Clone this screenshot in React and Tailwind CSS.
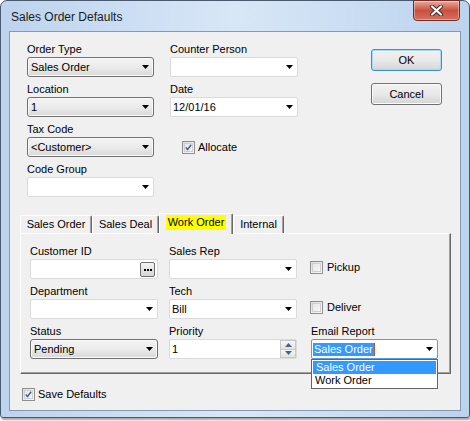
import React from "react";

const Arrow = () => (
  <svg width="7" height="4" viewBox="0 0 7 4" className="shrink-0">
    <path d="M0 0h7L3.5 4z" fill="#000" />
  </svg>
);

const Check = ({ checked }) => (
  <div className="w-[13px] h-[13px] border border-[#8e8f8f] bg-gradient-to-br from-[#dcdcdc] to-[#fafafa] flex items-center justify-center shrink-0">
    <div className="w-[9px] h-[9px] border border-[#cfcfcf] bg-gradient-to-br from-[#e4e4e4] to-[#f8f8f8] flex items-center justify-center">
      {checked && (
        <svg width="9" height="9" viewBox="0 0 9 9">
          <path d="M1 4.5l2.2 2.6L8 1" fill="none" stroke="#3f5aa8" strokeWidth="1.8" />
        </svg>
      )}
    </div>
  </div>
);

const Label = ({ children }) => (
  <div className="h-[15px] leading-[15px] whitespace-nowrap">{children}</div>
);

const Combo = ({ value, gray, w = "w-[127px]" }) =>
  gray ? (
    <div
      className={`${w} h-[20px] rounded-[3px] border border-[#707070] bg-gradient-to-b from-[#f4f4f4] via-[#ebebeb] to-[#d8d8d8] flex items-center pl-[3px] pr-[4px] shadow-[inset_0_0_0_1px_#fafafa]`}
    >
      <span className="flex-1 whitespace-nowrap">{value}</span>
      <Arrow />
    </div>
  ) : (
    <div
      className={`${w} h-[20px] rounded-[2px] border border-[#dadada] bg-white flex items-center pl-[2px] pr-[4px]`}
    >
      <span className="flex-1 whitespace-nowrap">{value}</span>
      <Arrow />
    </div>
  );

const Tab = ({ label, w, active }) =>
  active ? (
    <div
      className={`${w} h-[21px] -mb-px relative z-10 bg-[#f0f0f0] border-t border-l border-white border-r border-r-[#696969] shadow-[inset_-1px_0_0_#a0a0a0] rounded-t-[2px] flex justify-center pt-[1px]`}
    >
      <span className="bg-[#ffff00] h-[15px] leading-[15px] px-[2px] whitespace-nowrap">{label}</span>
    </div>
  ) : (
    <div
      className={`${w} h-[18px] bg-[#f0f0f0] border-t border-l border-white border-r border-r-[#696969] shadow-[inset_-1px_0_0_#a0a0a0] rounded-t-[2px] flex justify-center pt-[1px] whitespace-nowrap leading-[15px]`}
    >
      {label}
    </div>
  );

export default function App() {
  return (
    <div className="w-[470px] h-[421px] bg-white font-['Liberation_Sans',Arial,sans-serif] text-[11px] text-black">
      <div className="w-[470px] h-[418px] rounded-t-[7px] rounded-b-[3px] border border-[#4a5a6e] bg-gradient-to-r from-[#bdd3ee] via-[#d8e7f7] to-[#bcd3ee] flex flex-col px-[8px] pb-[6px] shadow-[1px_2px_2px_rgba(0,0,0,0.35)]">
        {/* title bar */}
        <div className="h-[30px] relative shrink-0">
          <div className="pl-[2px] pt-[9px] text-[12px] leading-[14px] text-[#1b1b1b]">
            Sales Order Defaults
          </div>
          <div className="absolute right-[1px] top-[-1px] w-[47px] h-[21px] rounded-b-[4px] border border-[#6d2f28] bg-gradient-to-b from-[#e9a99c] via-[#c9503e] to-[#d7705f] shadow-[inset_0_0_0_1px_rgba(255,255,255,0.35)] flex items-center justify-center">
            <svg width="15" height="11" viewBox="0 0 15 11">
              <path d="M3 1.5l9 8M12 1.5l-9 8" stroke="#3b2a2a" strokeWidth="4" strokeLinecap="round" />
              <path d="M3 1.5l9 8M12 1.5l-9 8" stroke="#fff" strokeWidth="2.2" strokeLinecap="round" />
            </svg>
          </div>
        </div>

        {/* client area */}
        <div className="flex-1 border border-[#8799b0] bg-[#f0f0f0] flex flex-col">
          <div className="flex pl-[17px] pt-[10px]">
            <div className="w-[127px] flex flex-col gap-[5px]">
              <div>
                <Label>Order Type</Label>
                <Combo gray value="Sales Order" />
              </div>
              <div>
                <Label>Location</Label>
                <Combo gray value="1" />
              </div>
              <div>
                <Label>Tax Code</Label>
                <Combo gray value="<Customer>" />
              </div>
              <div>
                <Label>Code Group</Label>
                <Combo value="" />
              </div>
            </div>
            <div className="w-[128px] ml-[16px] flex flex-col gap-[5px]">
              <div>
                <Label>Counter Person</Label>
                <Combo value="" w="w-[128px]" />
              </div>
              <div>
                <Label>Date</Label>
                <Combo value="12/01/16" w="w-[128px]" />
              </div>
              <div>
                <div className="h-[15px]" />
                <div className="h-[20px] flex items-center pl-[12px] gap-[3px]">
                  <Check checked />
                  <span>Allocate</span>
                </div>
              </div>
            </div>
            <div className="w-[71px] ml-[73px] pt-[7px] flex flex-col gap-[12px]">
              <div className="h-[22px] rounded-[3px] border border-[#3c8fd2] bg-gradient-to-b from-[#f2f2f2] via-[#e9e9e9] to-[#d6d6d6] shadow-[inset_0_0_0_1px_#a9dbf6] flex items-center justify-center">
                OK
              </div>
              <div className="h-[22px] rounded-[3px] border border-[#707070] bg-gradient-to-b from-[#f2f2f2] via-[#e9e9e9] to-[#d4d4d4] shadow-[inset_0_0_0_1px_#fbfbfb] flex items-center justify-center">
                Cancel
              </div>
            </div>
          </div>

          {/* tabs */}
          <div className="ml-[10px] mr-[9px] mt-[16px]">
            <div className="h-[20px] flex items-end">
              <Tab label="Sales Order" w="w-[72px]" />
              <Tab label="Sales Deal" w="w-[67px]" />
              <Tab label="Work Order" w="w-[74px]" active />
              <Tab label="Internal" w="w-[51px]" />
            </div>
            <div className="h-[141px] border-t border-l border-white border-r border-b border-r-[#696969] border-b-[#696969] shadow-[inset_-1px_-1px_0_#a0a0a0] flex pl-[9px] pt-[10px]">
              <div className="w-[128px] flex flex-col gap-[5px]">
                <div>
                  <Label>Customer ID</Label>
                  <div className="h-[20px] rounded-[2px] border border-[#dadada] bg-white flex items-center justify-end pr-[2px]">
                    <div className="w-[15px] h-[15px] rounded-[2px] border border-[#707070] bg-gradient-to-b from-[#f4f4f4] to-[#d6d6d6] flex items-center justify-center gap-[1px] pt-[1px]">
                      <span className="w-[2px] h-[2px] bg-black" />
                      <span className="w-[2px] h-[2px] bg-black" />
                      <span className="w-[2px] h-[2px] bg-black" />
                    </div>
                  </div>
                </div>
                <div>
                  <Label>Department</Label>
                  <Combo value="" w="w-[128px]" />
                </div>
                <div>
                  <Label>Status</Label>
                  <Combo gray value="Pending" w="w-[128px]" />
                </div>
              </div>
              <div className="w-[128px] ml-[11px] flex flex-col gap-[5px]">
                <div>
                  <Label>Sales Rep</Label>
                  <Combo value="" w="w-[128px]" />
                </div>
                <div>
                  <Label>Tech</Label>
                  <Combo value="Bill" w="w-[128px]" />
                </div>
                <div>
                  <Label>Priority</Label>
                  <div className="h-[20px] rounded-[2px] border border-[#dadada] bg-white flex items-center pl-[2px]">
                    <span className="flex-1">1</span>
                    <div className="w-[16px] h-[18px] flex flex-col">
                      <div className="flex-1 border border-[#c8c8c8] bg-gradient-to-b from-[#f6f6f6] to-[#e2e2e2] flex items-center justify-center">
                        <svg width="7" height="4" viewBox="0 0 7 4">
                          <path d="M0 4h7L3.5 0z" fill="#4d6185" />
                        </svg>
                      </div>
                      <div className="flex-1 border border-t-0 border-[#c8c8c8] bg-gradient-to-b from-[#f6f6f6] to-[#e2e2e2] flex items-center justify-center">
                        <svg width="7" height="4" viewBox="0 0 7 4">
                          <path d="M0 0h7L3.5 4z" fill="#4d6185" />
                        </svg>
                      </div>
                    </div>
                  </div>
                </div>
              </div>
              <div className="w-[128px] ml-[13px] flex flex-col gap-[5px]">
                <div>
                  <div className="h-[15px]" />
                  <div className="h-[20px] flex items-start pt-[2px] gap-[4px]">
                    <Check />
                    <span className="leading-[13px]">Pickup</span>
                  </div>
                </div>
                <div>
                  <div className="h-[15px]" />
                  <div className="h-[20px] flex items-start pt-[2px] gap-[4px]">
                    <Check />
                    <span className="leading-[13px]">Deliver</span>
                  </div>
                </div>
                <div className="relative pl-[1px]">
                  <Label>Email Report</Label>
                  <div className="w-[127px] h-[20px] rounded-[2px] border border-[#569de5] bg-white flex items-center pl-[1px] pr-[4px]">
                    <span className="flex-1 flex items-center">
                      <span className="bg-[#3399ff] text-white px-[1px] leading-[13px]">Sales Order</span>
                      <span className="w-px h-[13px] bg-[#c0581e]" />
                    </span>
                    <Arrow />
                  </div>
                  <div className="absolute left-[1px] top-[35px] z-20 w-[127px] border border-[#646464] bg-white p-px">
                    <div className="h-[13px] leading-[13px] bg-[#3399ff] text-white pl-[3px]">Sales Order</div>
                    <div className="h-[13px] leading-[13px] pl-[2px]">Work Order</div>
                  </div>
                </div>
              </div>
            </div>
          </div>

          <div className="ml-[12px] mt-[14px] h-[13px] flex items-center gap-[3px]">
            <Check checked />
            <span>Save Defaults</span>
          </div>
        </div>
      </div>
    </div>
  );
}
